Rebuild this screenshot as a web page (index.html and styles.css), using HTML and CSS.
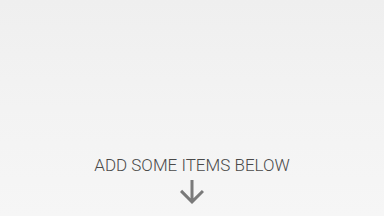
FILE: index.html
```html
<!DOCTYPE html>
<html>
<head>
<meta charset="utf-8">
<link rel="stylesheet" href="styles.css">
</head>
<body>
<div class="screen">
  <div class="hint">
    <div class="hint-text">ADD SOME ITEMS BELOW</div>
    <svg class="hint-arrow" viewBox="4 4 16 16" width="24" height="24">
      <path d="M20 12l-1.41-1.41L13 16.17V4h-2v12.17l-5.58-5.59L4 12l8 8 8-8z" fill="#7a7a7a"/>
    </svg>
  </div>
</div>
</body>
</html>
```
FILE: styles.css
```css
html, body {
  margin: 0;
  padding: 0;
}
body {
  width: 384px;
  height: 216px;
  overflow: hidden;
  font-family: Roboto, "Liberation Sans", sans-serif;
}
.screen {
  width: 384px;
  height: 216px;
  background: linear-gradient(to bottom, #efefef 0%, #f3f3f3 50%, #f6f6f6 100%);
  display: flex;
  flex-direction: column;
  justify-content: flex-end;
  align-items: center;
}
.hint {
  display: flex;
  flex-direction: column;
  align-items: center;
  padding-bottom: 12px;
}
.hint-text {
  font-size: 17px;
  font-weight: 300;
  color: #4a4a4a;
  line-height: 20px;
}
.hint-arrow {
  margin-top: 5px;
  display: block;
}
```
